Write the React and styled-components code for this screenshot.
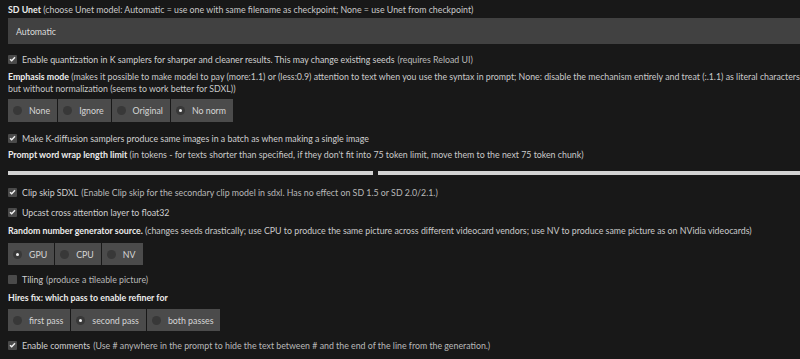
import React from 'react';
import styled, { createGlobalStyle } from 'styled-components';

const GlobalStyle = createGlobalStyle`
  html, body {
    margin: 0;
    padding: 0;
    background: #181818;
    overflow: hidden;
  }
  body {
    font-family: 'Lato', 'Noto Sans', sans-serif;
    font-size: 8.8px;
    color: #c9c9c9;
  }
`;

const Page = styled.div`
  width: 1352px;
  padding: 4px 0 0 8px;
  display: flex;
  flex-direction: column;
`;

const Field = styled.div`
  margin-top: ${({ $gap }) => $gap || 0}px;
`;

const Label = styled.div`
  line-height: 12px;
  white-space: nowrap;
  color: #cacaca;

  b {
    color: #ececec;
    font-weight: 700;
  }
`;

const Dropdown = styled.div`
  margin-top: 2px;
  height: 26px;
  background: #414141;
  display: flex;
  align-items: center;
  padding-left: 8px;
  color: #dcdcdc;
`;

const CheckRow = styled.label`
  display: flex;
  align-items: center;
  height: 12px;
  white-space: nowrap;
  color: #d0d0d0;
`;

const Box = styled.span`
  width: 9px;
  height: 9px;
  margin-right: 5px;
  background: #4a4a4a;
  border-radius: 1px;
  display: flex;
  align-items: center;
  justify-content: center;
`;

const Muted = styled.span`
  color: #b9b9b9;
  margin-left: 3px;
`;

const RadioGroup = styled.div`
  display: flex;
  gap: 1px;
  height: ${({ $h }) => $h || 22}px;
  margin-top: ${({ $gap }) => $gap || 0}px;
`;

const RadioItem = styled.div`
  display: flex;
  align-items: center;
  padding: 0 7px 0 5px;
  background: #4b4b4b;
  color: #d6d6d6;
`;

const Dot = styled.span`
  width: 9px;
  height: 9px;
  border-radius: 50%;
  background: #383838;
  margin-right: 7px;
  display: flex;
  align-items: center;
  justify-content: center;

  &::after {
    content: '';
    width: 3px;
    height: 3px;
    border-radius: 50%;
    background: ${({ $on }) => ($on ? '#f0f0f0' : 'transparent')};
  }
`;

const Slider = styled.div`
  display: flex;
  gap: 5px;
  height: 4px;
`;

const Track = styled.div`
  height: 4px;
  background: #d2d2d2;
  flex: ${({ $grow }) => ($grow ? 1 : 'none')};
`;

const Check = () => (
  <svg width="7" height="6" viewBox="0 0 7 6">
    <path d="M1 3.2 L2.7 4.8 L6 1.2" fill="none" stroke="#f2f2f2" strokeWidth="1.4" />
  </svg>
);

const Checkbox = ({ checked, children, extra }) => (
  <CheckRow>
    <Box>{checked && <Check />}</Box>
    {children}
    {extra && <Muted>{extra}</Muted>}
  </CheckRow>
);

const Radios = ({ options, value, gap, h }) => (
  <RadioGroup $gap={gap} $h={h}>
    {options.map((o) => (
      <RadioItem key={o}>
        <Dot $on={o === value} />
        {o}
      </RadioItem>
    ))}
  </RadioGroup>
);

const WRAP_VALUE = 20;
const WRAP_MAX = 74;

export default function App() {
  return (
    <>
      <GlobalStyle />
      <Page>
        <Field>
          <Label>
            <b>SD Unet</b> (choose Unet model: Automatic = use one with same filename as checkpoint; None = use Unet
            from checkpoint)
          </Label>
          <Dropdown>Automatic</Dropdown>
        </Field>

        <Field $gap={9}>
          <Checkbox checked extra="(requires Reload UI)">
            Enable quantization in K samplers for sharper and cleaner results. This may change existing seeds
          </Checkbox>
        </Field>

        <Field $gap={6}>
          <Label>
            <b>Emphasis mode</b> (makes it possible to make model to pay (more:1.1) or (less:0.9) attention to text
            when you use the syntax in prompt; None: disable the mechanism entirely and treat (:.1.1) as literal
            characters, Ignore: to just remove the mechanism, Original: the original emphasis implementation, No norm:
            same as Original,
            <br />
            but without normalization (seems to work better for SDXL))
          </Label>
          <Radios gap={4} h={23} options={['None', 'Ignore', 'Original', 'No norm']} value="No norm" />
        </Field>

        <Field $gap={10}>
          <Checkbox checked>Make K-diffusion samplers produce same images in a batch as when making a single image</Checkbox>
        </Field>

        <Field $gap={5}>
          <Label>
            <b>Prompt word wrap length limit</b> (in tokens - for texts shorter than specified, if they don't fit into
            75 token limit, move them to the next 75 token chunk)
          </Label>
        </Field>

        <Field $gap={10}>
          <Slider>
            <Track style={{ width: `${(WRAP_VALUE / WRAP_MAX) * 100}%` }} />
            <Track $grow />
          </Slider>
        </Field>

        <Field $gap={11}>
          <Checkbox
            checked
            extra="(Enable Clip skip for the secondary clip model in sdxl. Has no effect on SD 1.5 or SD 2.0/2.1.)"
          >
            Clip skip SDXL
          </Checkbox>
        </Field>

        <Field $gap={8}>
          <Checkbox checked>Upcast cross attention layer to float32</Checkbox>
        </Field>

        <Field $gap={7}>
          <Label>
            <b>Random number generator source.</b> (changes seeds drastically; use CPU to produce the same picture
            across different videocard vendors; use NV to produce same picture as on NVidia videocards)
          </Label>
          <Radios gap={6} options={['GPU', 'CPU', 'NV']} value="GPU" />
        </Field>

        <Field $gap={8}>
          <Checkbox extra="(produce a tileable picture)">Tiling</Checkbox>
        </Field>

        <Field $gap={7}>
          <Label>
            <b>Hires fix: which pass to enable refiner for</b>
          </Label>
          <Radios gap={5} options={['first pass', 'second pass', 'both passes']} value="second pass" />
        </Field>

        <Field $gap={8}>
          <Checkbox
            checked
            extra="(Use # anywhere in the prompt to hide the text between # and the end of the line from the generation.)"
          >
            Enable comments
          </Checkbox>
        </Field>
      </Page>
    </>
  );
}
